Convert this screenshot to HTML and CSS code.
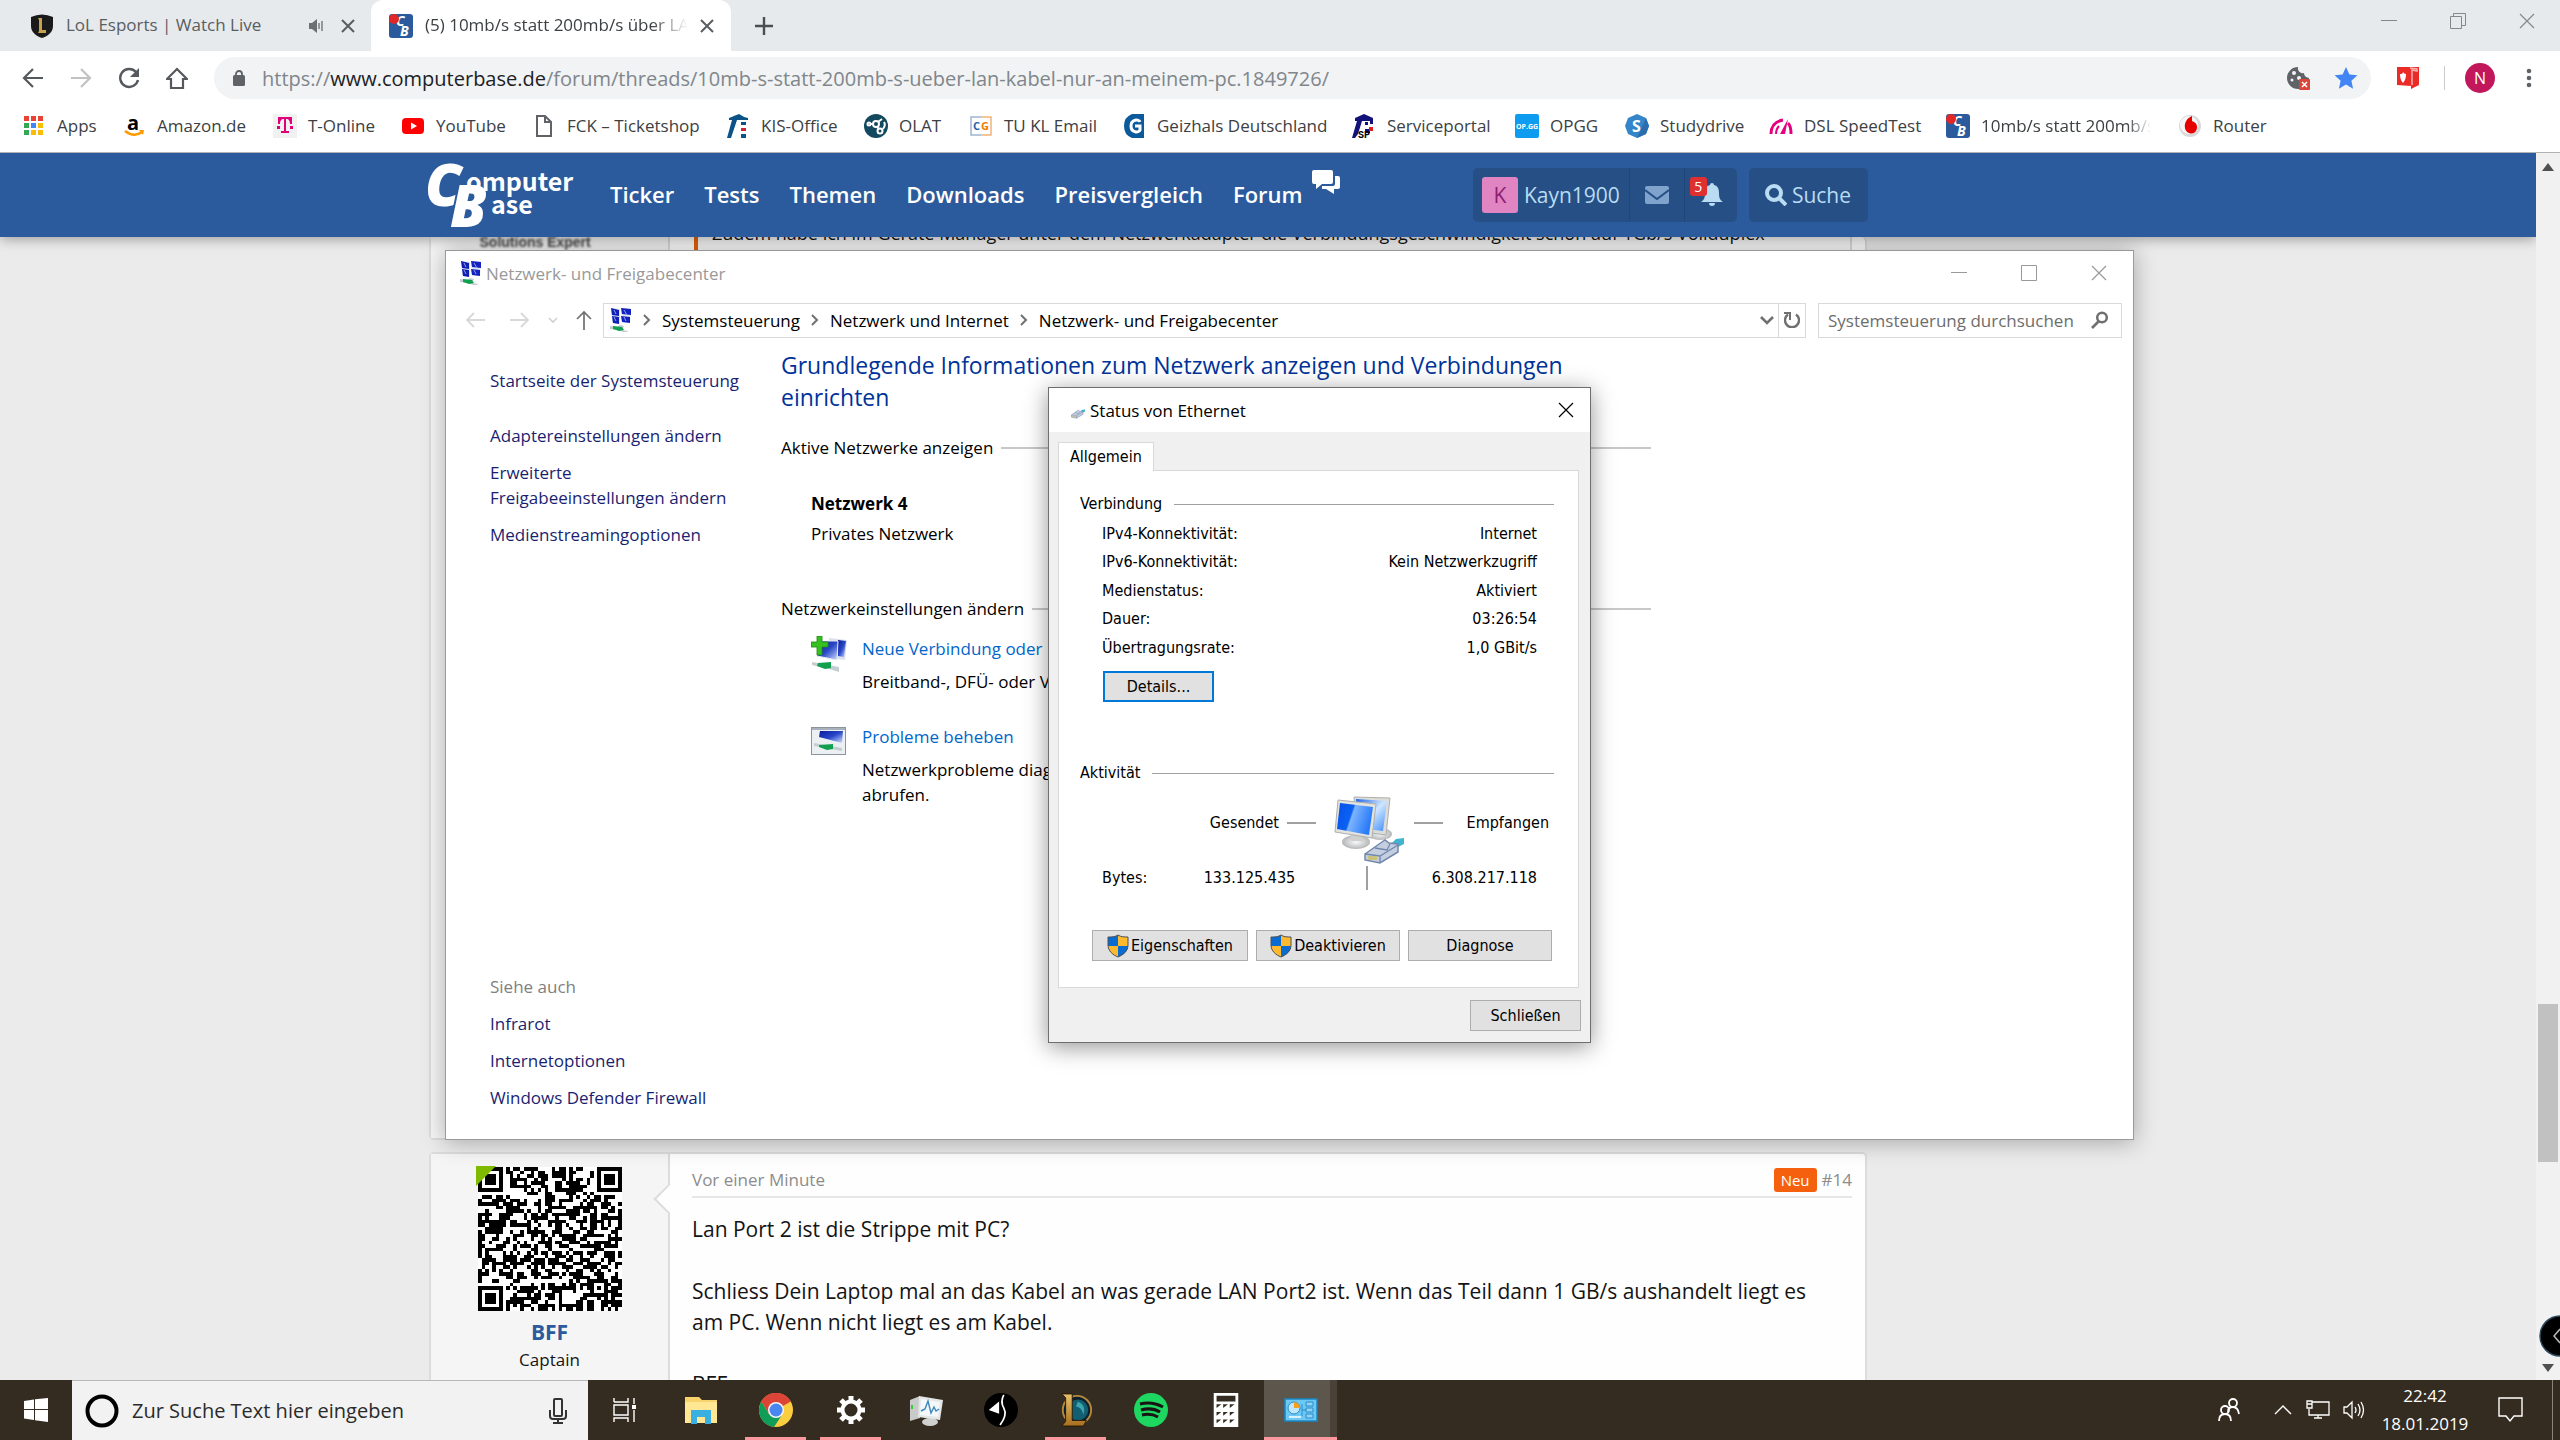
FILE: index.html
```html
<!DOCTYPE html>
<html lang="de">
<head>
<meta charset="utf-8">
<title>(5) 10mb/s statt 200mb/s über LAN</title>
<link rel="stylesheet" href="styles.css">
</head>
<body>
<svg class="defs" aria-hidden="true">
  <defs>
    <linearGradient id="screen" x1="0" y1="0" x2="1" y2="1"><stop offset="0" stop-color="#0a1a9a"/><stop offset=".5" stop-color="#2a48c8"/><stop offset="1" stop-color="#d6e2ff"/></linearGradient>
    <linearGradient id="lcd" x1="0" y1="0" x2="1" y2=".3"><stop offset="0" stop-color="#0a50e8"/><stop offset=".45" stop-color="#0a62f4"/><stop offset=".5" stop-color="#7db4ff"/><stop offset="1" stop-color="#2a7cf8"/></linearGradient>
    <linearGradient id="lcd2" x1="0" y1="0" x2="1" y2="1"><stop offset="0" stop-color="#1c62e8"/><stop offset=".5" stop-color="#cfe6ff"/><stop offset="1" stop-color="#3c8cf8"/></linearGradient>
    <radialGradient id="stand"><stop offset="0" stop-color="#fafafa"/><stop offset="1" stop-color="#b4b6b8"/></radialGradient>
    <linearGradient id="gold" x1="0" y1="0" x2="0" y2="1"><stop offset="0" stop-color="#e8c06a"/><stop offset="1" stop-color="#a8701f"/></linearGradient>
    <symbol id="cb" viewBox="0 0 24 24"><rect width="24" height="24" rx="3" fill="#2b5b9c"/><text x="7" y="12" class="cb-c">C</text><text x="11" y="22" class="cb-b">B</text><circle cx="5" cy="5" r="5" fill="#e02828"/></symbol>
    <symbol id="net" viewBox="0 0 24 24"><path d="M3 0l9 1v15l-8-2z" fill="#dfe4ee"/><path d="M3 0l8 2v6l-7-1zM4 8l7 1v7l-6-1z" fill="#0f1fb4"/><path d="M13 0l10 1-1 14-8-1z" fill="#dfe4ee"/><path d="M13 0l10 1v6l-9-1zM13 8l9 1v6l-8-1z" fill="#1322c0"/><path d="M6 2l2 4M16 2l3 5M6 9l2 4M16 9l2 4" stroke="#8fa2f0" stroke-width="1"/><path d="M2 18l7 1 3-2 4 1-2 4 6 1-2 2-8-3-8-1z" fill="#c3cbd2"/><path d="M5 18l9 1 2 3-5 1-6-2z" fill="#10a050"/></symbol>
    <symbol id="shield" viewBox="0 0 22 24"><path d="M11 1C8 3 5 3 1 3v8c0 6 5 10 10 12 5-2 10-6 10-12V3c-4 0-7 0-10-2z" fill="#ffb92e"/><path d="M11 1C8 3 5 3 1 3v9h10zM11 12h10c0 6-5 9-10 11z" fill="#0a6cd0"/><path d="M11 1C8 3 5 3 1 3v8c0 6 5 10 10 12 5-2 10-6 10-12V3c-4 0-7 0-10-2z" fill="none" stroke="#4b5058" stroke-width="1"/></symbol>
    <symbol id="plug" viewBox="0 0 40 26"><path d="M26 7l6-6 8-1v6l-8 4z" fill="#3fb5d2"/><path d="M1 16L18 4l3-2 4 3 9 1v8L16 25 1 22z" fill="#c4cede" stroke="#7088ae" stroke-width="1.5"/><path d="M1 16l15 2L34 7M16 18v7M11 10l12 2 3-6" fill="none" stroke="#7088ae" stroke-width="1.3"/><path d="M4 18h9v4H4z" fill="#c8c27c"/></symbol>
    <symbol id="x" viewBox="0 0 16 16"><path d="M1 1l14 14M15 1L1 15" fill="none" stroke="currentColor" stroke-width="1.2"/></symbol>
  </defs>
</svg>

<header class="browser">
  <div class="tabs">
    <div class="tab tab-idle">
      <svg class="i24" viewBox="0 0 24 24"><path d="M1 3Q12-2 23 3v9c0 6-5 10-11 12C6 22 1 18 1 12z" fill="#1a1a1a"/><path d="M8 4h4v12h4v3H8l1-2V6z" fill="#c9a24b"/></svg>
      <span class="tab-title">LoL Esports | Watch Live</span>
      <svg class="i16" viewBox="0 0 16 16"><path d="M0 5h3l5-4v14l-5-4H0z" fill="#6b6e72"/><path d="M10 5v6M13 3v10" stroke="#6b6e72" stroke-width="1.3"/></svg>
      <button class="tab-x" aria-label="Tab schließen"><svg viewBox="0 0 14 14"><path d="M1 1l12 12M13 1L1 13" stroke="#5a5d61" stroke-width="2"/></svg></button>
    </div>
    <div class="tab tab-active">
      <svg class="i24"><use href="#cb"/></svg>
      <span class="tab-title fade">(5) 10mb/s statt 200mb/s über LAN</span>
      <button class="tab-x" aria-label="Tab schließen"><svg viewBox="0 0 14 14"><path d="M1 1l12 12M13 1L1 13" stroke="#5a5d61" stroke-width="2"/></svg></button>
    </div>
    <button class="tab-new" aria-label="Neuer Tab"><svg viewBox="0 0 18 18"><path d="M9 0v18M0 9h18" stroke="#4a4d51" stroke-width="2.4"/></svg></button>
    <div class="win-buttons">
      <button aria-label="Minimieren"><svg viewBox="0 0 16 16"><path d="M0 7.500h16" stroke="currentColor"/></svg></button>
      <button aria-label="Verkleinern"><svg viewBox="0 0 16 16"><path d="M.5 3.500h11v12H.5zM3.500 3V.5h12v12H12" fill="none" stroke="currentColor"/></svg></button>
      <button aria-label="Schließen"><svg><use href="#x"/></svg></button>
    </div>
  </div>
  <div class="toolbar">
    <button class="tool" aria-label="Zurück"><svg viewBox="0 0 22 22"><path d="M21 11H2M11 2l-9 9 9 9" fill="none" stroke="#55585c" stroke-width="2.2"/></svg></button>
    <button class="tool" aria-label="Vor"><svg viewBox="0 0 22 22"><path d="M1 11h19M11 2l9 9-9 9" fill="none" stroke="#c0c2c4" stroke-width="2.200"/></svg></button>
    <button class="tool" aria-label="Neu laden"><svg viewBox="0 0 22 22"><path d="M18 5a9 9 0 1 0 2 8" fill="none" stroke="#55585c" stroke-width="2.400"/><path d="M21 1v9h-9z" fill="#55585c"/></svg></button>
    <button class="tool" aria-label="Startseite"><svg viewBox="0 0 22 22"><path d="M1 12L11 2l10 10h-4v9H5v-9z" fill="none" stroke="#55585c" stroke-width="2.200"/></svg></button>
    <div class="omnibox">
      <svg class="lock" viewBox="0 0 14 18"><rect x="1" y="6" width="12" height="11" rx="1.500" fill="#5f6368"/><path d="M4 7V5a3 3 0 0 1 6 0v2" fill="none" stroke="#5f6368" stroke-width="1.800"/></svg>
      <span class="url">https://<b>www.computerbase.de</b>/forum/threads/10mb-s-statt-200mb-s-ueber-lan-kabel-nur-an-meinem-pc.1849726/</span>
      <svg class="i24" viewBox="0 0 24 24"><path d="M11 1a11 11 0 1 0 11 11 5 5 0 0 1-5-5 5 5 0 0 1-6-6z" fill="#5f6368"/><g fill="#f1f3f4"><circle cx="7" cy="7" r="2"/><circle cx="5" cy="14" r="1.500"/><circle cx="12" cy="12" r="2"/></g><rect x="12" y="13" width="11" height="11" rx="1" fill="#db4437"/><path d="M15 16l5 5m0-5l-5 5" stroke="#fff" stroke-width="1.500"/></svg>
      <svg class="i24" viewBox="0 0 24 24"><path d="M12 1l3.400 7.500 8 .8-6 5.400 1.700 8L12 18.500 4.900 22.700l1.700-8-6-5.400 8-.8z" fill="#4285f4"/></svg>
    </div>
    <svg class="i24 ext" viewBox="0 0 24 24"><path d="M1 1h22v18l-8 4v-3L1 19z" fill="#ea2b28"/><path d="M14 2l7 1v2l-5-1v15" fill="none" stroke="#f9b1af" stroke-width="1.500"/><path d="M4 8q3 0 3-2 1 2 3 2 0 6-3 9-3-3-3-9z" fill="#fff"/></svg>
    <span class="sep"></span>
    <button class="profile" aria-label="Profil">N</button>
    <button class="dots" aria-label="Menü"><svg viewBox="0 0 6 20"><circle cx="3" cy="3" r="2.300"/><circle cx="3" cy="10" r="2.300"/><circle cx="3" cy="17" r="2.300"/></svg></button>
  </div>
  <nav class="bookmarks">
    <a href="#"><svg viewBox="0 0 24 24"><path d="M2 2h5v5H2zM9 2h5v5H9zM16 2h5v5h-5z" fill="#ea4335"/><path d="M2 9h5v5H2zM2 16h5v5H2z" fill="#34a853"/><path d="M9 9h5v5H9z" fill="#4285f4"/><path d="M16 9h5v5h-5zM9 16h5v5H9zM16 16h5v5h-5z" fill="#fbbc05"/></svg><span>Apps</span></a>
    <a href="#"><svg viewBox="0 0 24 24"><text x="5" y="16" class="amz">a</text><path d="M3 17q9 7 17 1" fill="none" stroke="#ff9900" stroke-width="2.500"/><path d="M17 16h5l-1 5z" fill="#ff9900"/></svg><span>Amazon.de</span></a>
    <a href="#"><svg viewBox="0 0 24 24"><path d="M0 0h24v24H0z" fill="#f1f1f1"/><path d="M5 3h14v7h-2c0-3-1-5-4-5v12h3v2H8v-2h3V5C8 5 7 7 7 10H5zM4 12h3v3H4zM17 12h3v3h-3z" fill="#e2007a"/></svg><span>T-Online</span></a>
    <a href="#"><svg viewBox="0 0 24 24"><rect x="1" y="4" width="22" height="16" rx="4" fill="#f00"/><path d="M10 8.500v7l6-3.500z" fill="#fff"/></svg><span>YouTube</span></a>
    <a href="#"><svg viewBox="0 0 24 24"><path d="M5 2h8l6 6v14H5zM13 2v6h6" fill="none" stroke="#5f6368" stroke-width="2"/></svg><span>FCK – Ticketshop</span></a>
    <a href="#"><svg viewBox="0 0 24 24"><path d="M3 4q7-3 10-4 4 3 9 4v2H3z" fill="#0a5288"/><path d="M6 6h5L5 24H1z" fill="#0a5288"/><path d="M15 8h5v3h-5zM15 20h5v4h-5z" fill="#0a5288"/><path d="M15 14h5v3h-5z" fill="#d0203a"/></svg><span>KIS-Office</span></a>
    <a href="#"><svg viewBox="0 0 24 24"><circle cx="12" cy="12" r="12" fill="#12495e"/><g fill="none" stroke="#fff" stroke-width="2"><circle cx="12" cy="10" r="3"/><circle cx="5" cy="10" r="1.500"/><circle cx="16" cy="17" r="2.500"/><path d="M7 10h2M13 13l2 2M14 8l4-3M20 8q2 3-1 7"/></g></svg><span>OLAT</span></a>
    <a href="#"><svg viewBox="0 0 24 24"><path d="M12 3H2v18h10" fill="none" stroke="#9fb4d0" stroke-width="1.500"/><path d="M12 3h10v18H12" fill="none" stroke="#f2b27a" stroke-width="1.500"/><text x="4" y="16" class="cg" fill="#1f5fa8">C</text><text x="12" y="16" class="cg" fill="#f07800">G</text></svg><span>TU KL Email</span></a>
    <a href="#"><svg viewBox="0 0 24 24"><path d="M22 0v24H10Q2 21 2 12T10 0z" fill="#0b5a9c"/><path d="M18 8c-1-3-9-3-9 4s8 7 9 4v-4h-5" fill="none" stroke="#fff" stroke-width="3"/></svg><span>Geizhals Deutschland</span></a>
    <a href="#"><svg viewBox="0 0 24 24"><path d="M3 4l9-4 9 4v3H3zM5 7h5L6 20l-3 4H0zM13 8h3v3h-3zM13 15h5v4h-5zM18 7h3v3h-3z" fill="#12127a"/><path d="M17 13h4v4h-4z" fill="#e02020"/><text x="6" y="24" class="sp">SP</text></svg><span>Serviceportal</span></a>
    <a href="#"><svg viewBox="0 0 24 24"><rect width="24" height="24" rx="2" fill="#0d9cf0"/><text x="1" y="15" class="opgg">OP.GG</text></svg><span>OPGG</span></a>
    <a href="#"><svg viewBox="0 0 24 24"><path d="M12 0l9 4 3 8-3 8-9 4-9-4-3-8 3-8z" fill="#3486c8"/><path d="M12 24l9-4 3-8-3-8z" fill="#2a6eae"/><text x="7" y="18" class="studs">S</text></svg><span>Studydrive</span></a>
    <a href="#"><svg viewBox="0 0 24 24"><path d="M2 20q0-12 12-14M22 20q0-8-3-11" fill="none" stroke="#e6007e" stroke-width="3"/><path d="M7 20q0-5 3-8" fill="none" stroke="#e6007e" stroke-width="2"/><path d="M11 20L19 5l-3 15z" fill="#e6007e"/></svg><span>DSL SpeedTest</span></a>
    <a href="#"><svg><use href="#cb"/></svg><span class="fade">10mb/s statt 200mb/s über</span></a>
    <a href="#"><svg viewBox="0 0 24 24"><circle cx="12" cy="12" r="11" fill="#d9d9d9"/><circle cx="11" cy="11" r="9" fill="#f6f6f6"/><path d="M14 2c-5 2-8 7-7 12a6 6 0 0 0 12-1c0-4-3-5-5-6 0-2 0-3 0-5z" fill="#e60000"/></svg><span>Router</span></a>
  </nav>
</header>

<div class="viewport">
  <div class="page">
    <header class="site">
      <div class="site-in">
        <svg class="logo" viewBox="0 0 150 68" role="img" aria-label="ComputerBase"><text x="-3" y="45" class="l-big">C</text><text x="22" y="66" class="l-big l-b">B</text><text x="38" y="30" class="l-small">omputer</text><text x="63" y="53" class="l-small">ase</text></svg>
        <nav class="site-nav">
          <a href="#">Ticker</a><a href="#">Tests</a><a href="#">Themen</a><a href="#">Downloads</a><a href="#">Preisvergleich</a><a href="#">Forum</a>
          <svg class="chat" viewBox="0 0 28 25"><path d="M2 0h17q2 0 2 2v10q0 2-2 2h-9l-6 5v-5H2q-2 0-2-2V2q0-2 2-2z" fill="#fff"/><path d="M23 6h3q2 0 2 2v9q0 2-2 2h-4v5l-8-5h-4v-3h11q2 0 2-2z" fill="#fff"/></svg>
        </nav>
        <div class="user">
          <a href="#" class="user-name"><span class="k">K</span>Kayn1900</a>
          <a href="#" class="user-ic" aria-label="Nachrichten"><svg viewBox="0 0 24 18"><rect width="24" height="18" rx="2" fill="#7fa3cc"/><path d="M0 4l12 9 12-9" fill="none" stroke="#264f86" stroke-width="2"/></svg></a>
          <a href="#" class="user-ic bell" aria-label="Hinweise"><svg viewBox="0 0 22 24"><path d="M11 0a2 2 0 0 1 2 2c4 1 5 4 5 8 0 5 1 7 4 9H0c3-2 4-4 4-9 0-4 1-7 5-8a2 2 0 0 1 2-2zM8 20h6a3 3 0 0 1-6 0z" fill="#b9dcf3"/></svg><span class="count">5</span></a>
        </div>
        <button class="site-search"><svg viewBox="0 0 22 22"><circle cx="9" cy="9" r="7" fill="none" stroke="#b9dcf3" stroke-width="4"/><path d="M14 14l7 7" stroke="#b9dcf3" stroke-width="4"/></svg>Suche</button>
      </div>
    </header>
    <main class="content">
      <article class="post prev">
        <aside class="author"><span class="badge-card">Solutions Expert</span></aside>
        <div class="body"><blockquote>Zudem habe ich im Geräte Manager unter dem Netzwerkadapter die Verbindungsgeschwindigkeit schon auf 1Gb/s Vollduplex</blockquote></div>
      </article>
      <article class="post">
        <aside class="author">
          <div class="avatar"><svg id="qr" viewBox="0 0 41 41" shape-rendering="crispEdges"></svg></div>
          <a href="#" class="nick">BFF</a>
          <span class="rank">Captain</span>
        </aside>
        <div class="body bubble">
          <div class="meta"><time>Vor einer Minute</time><span class="neu">Neu</span><a href="#">#14</a></div>
          <div class="text">Lan Port 2 ist die Strippe mit PC?<br><br>Schliess Dein Laptop mal an das Kabel an was gerade LAN Port2 ist. Wenn das Teil dann 1 GB/s aushandelt liegt es<br>am PC. Wenn nicht liegt es am Kabel.<br><br>BFF</div>
        </div>
      </article>
    </main>
  </div>
  <div class="scroll"><span class="up"></span><span class="thumb"></span><span class="down"></span></div>
  <button class="overlay" aria-label="Overlay öffnen"><svg viewBox="0 0 42 42"><circle cx="21" cy="21" r="20" fill="#000" stroke="#2c4a5c" stroke-width="1.500"/><path d="M21 14l-6 7 6 7" fill="none" stroke="#bbb" stroke-width="1.500"/></svg></button>
</div>

<section class="window explorer">
  <div class="ex-title"><svg class="i24"><use href="#net"/></svg><span>Netzwerk- und Freigabecenter</span>
    <div class="ex-buttons">
      <button aria-label="Minimieren"><svg viewBox="0 0 16 16"><path d="M0 7.500h16" stroke="currentColor"/></svg></button>
      <button aria-label="Maximieren"><svg viewBox="0 0 16 16"><path d="M.5.5h15v15H.5z" fill="none" stroke="currentColor"/></svg></button>
      <button aria-label="Schließen"><svg><use href="#x"/></svg></button>
    </div>
  </div>
  <div class="ex-bar">
    <svg class="nav-a" viewBox="0 0 20 20"><path d="M20 10H2M9 3l-7 7 7 7" fill="none" stroke="#d8d8d8" stroke-width="1.800"/></svg>
    <svg class="nav-b" viewBox="0 0 20 20"><path d="M0 10h18M11 3l7 7-7 7" fill="none" stroke="#d8d8d8" stroke-width="1.800"/></svg>
    <svg class="nav-c" viewBox="0 0 10 10"><path d="M1 3l4 4 4-4" fill="none" stroke="#d0d0d0" stroke-width="1.600"/></svg>
    <svg class="nav-d" viewBox="0 0 18 20"><path d="M9 20V2M2 9l7-7 7 7" fill="none" stroke="#707070" stroke-width="1.700"/></svg>
    <div class="address">
      <svg class="i24"><use href="#net"/></svg>
      <svg class="chev" viewBox="0 0 8 12"><path d="M1 1l5 5-5 5" fill="none" stroke="#707070" stroke-width="2"/></svg><span>Systemsteuerung</span>
      <svg class="chev" viewBox="0 0 8 12"><path d="M1 1l5 5-5 5" fill="none" stroke="#707070" stroke-width="2"/></svg><span>Netzwerk und Internet</span>
      <svg class="chev" viewBox="0 0 8 12"><path d="M1 1l5 5-5 5" fill="none" stroke="#707070" stroke-width="2"/></svg><span>Netzwerk- und Freigabecenter</span>
      <svg class="drop" viewBox="0 0 14 10"><path d="M1 2l6 6 6-6" fill="none" stroke="#707070" stroke-width="2.600"/></svg>
      <button class="reload" aria-label="Aktualisieren"><svg viewBox="0 0 16 16"><path d="M12 2.500A7 7 0 1 1 4 2.500" fill="none" stroke="#707070" stroke-width="2.400"/><path d="M0 1h6v7" fill="none" stroke="#707070" stroke-width="2"/></svg></button>
    </div>
    <label class="ex-search"><input type="text" placeholder="Systemsteuerung durchsuchen" aria-label="Systemsteuerung durchsuchen"><svg viewBox="0 0 18 18"><circle cx="11" cy="6.500" r="4.800" fill="none" stroke="#707070" stroke-width="2.500"/><path d="M8 10l-7 7" stroke="#707070" stroke-width="2.600"/></svg></label>
  </div>
  <div class="ex-main">
    <nav class="side">
      <a href="#" class="home">Startseite der Systemsteuerung</a>
      <a href="#">Adaptereinstellungen ändern</a>
      <a href="#">Erweiterte Freigabeeinstellungen ändern</a>
      <a href="#">Medienstreamingoptionen</a>
      <span class="also">Siehe auch</span>
      <a href="#">Infrarot</a>
      <a href="#">Internetoptionen</a>
      <a href="#">Windows Defender Firewall</a>
    </nav>
    <div class="center">
      <h1>Grundlegende Informationen zum Netzwerk anzeigen und Verbindungen einrichten</h1>
      <h2 class="rule">Aktive Netzwerke anzeigen</h2>
      <div class="network"><strong>Netzwerk 4</strong><span>Privates Netzwerk</span></div>
      <h2 class="rule">Netzwerkeinstellungen ändern</h2>
      <div class="task">
        <svg viewBox="0 0 36 36"><path d="M18 2l18 2-2 20-16-2z" fill="#dbe0ea"/><path d="M27 4l8 1-2 16-6-1z" fill="url(#screen)"/><path d="M8 5l19 0-1 19L6 20z" fill="url(#screen)" stroke="#e4e8f0"/><path d="M6 0h5v6h6v5h-6v8H6v-8H0V6h6z" fill="#35c020" stroke="#1c8a12" stroke-width=".8"/><path d="M1 26l27 5v5l-10-3-17-4z" fill="#c4ced2"/><path d="M7 27l13-1v6l-6 1-8-3z" fill="#12a050"/></svg>
        <div><a href="#">Neue Verbindung oder neues Netzwerk einrichten</a><p>Breitband-, DFÜ- oder VPN-Verbindung bzw. Router oder Zugriffspunkt einrichten.</p></div>
      </div>
      <div class="task">
        <svg viewBox="0 0 36 36"><rect x=".5" y="3.500" width="34" height="27" fill="#edf0f3" stroke="#8a949e"/><path d="M1 5h33" stroke="#a8b2bc" stroke-width="2"/><path d="M9 7h23l-1 12L8 13z" fill="url(#screen)"/><path d="M3 19l28 5v3L3 22z" fill="#c4ced2"/><path d="M8 21l14-1v5l-6 1-8-3z" fill="#12a050"/></svg>
        <div><a href="#">Probleme beheben</a><p>Netzwerkprobleme diagnostizieren und beheben oder Problembehandlungsinformationen abrufen.</p></div>
      </div>
    </div>
  </div>
</section>

<section class="window dialog" role="dialog" aria-label="Status von Ethernet">
  <div class="dl-title"><svg class="plug"><use href="#plug"/></svg><span>Status von Ethernet</span><button aria-label="Schließen"><svg><use href="#x"/></svg></button></div>
  <div class="dl-body">
    <button class="dl-tab">Allgemein</button>
    <div class="panel">
      <h3 class="rule">Verbindung</h3>
      <table>
        <tr><th>IPv4-Konnektivität:</th><td>Internet</td></tr>
        <tr><th>IPv6-Konnektivität:</th><td>Kein Netzwerkzugriff</td></tr>
        <tr><th>Medienstatus:</th><td>Aktiviert</td></tr>
        <tr><th>Dauer:</th><td>03:26:54</td></tr>
        <tr><th>Übertragungsrate:</th><td>1,0 GBit/s</td></tr>
      </table>
      <button class="btn focus">Details...</button>
      <h3 class="rule act">Aktivität</h3>
      <div class="traffic">
        <span>Gesendet</span><i></i>
        <svg class="pcs" viewBox="0 0 72 68"><ellipse cx="46" cy="38" rx="12" ry="6" fill="url(#stand)"/><path d="M20 1l36 1-4 37-30-4z" fill="#dcdcd8" stroke="#aeb0ae"/><path d="M22 3l31 2-4 30-26-3z" fill="url(#lcd2)"/><ellipse cx="22" cy="46" rx="14" ry="7" fill="url(#stand)"/><path d="M17 36h12v9H17z" fill="#cfd0ce"/><path d="M4 4l38 4-4 34L1 36z" fill="#e2e2de" stroke="#aeb0ae"/><path d="M6 7l33 4-4 28L3 33z" fill="url(#lcd)"/><svg x="29" y="42" width="42" height="26"><use href="#plug"/></svg></svg>
        <i></i><span>Empfangen</span>
      </div>
      <div class="bytes"><span>Bytes:</span><span class="out">133.125.435</span><i></i><span class="in">6.308.217.118</span></div>
      <div class="actions">
        <button class="btn wide"><svg><use href="#shield"/></svg>Eigenschaften</button>
        <button class="btn"><svg><use href="#shield"/></svg>Deaktivieren</button>
        <button class="btn">Diagnose</button>
      </div>
    </div>
    <button class="btn close">Schließen</button>
  </div>
</section>

<footer class="taskbar">
  <button class="start" aria-label="Start"><svg viewBox="0 0 24 24"><path d="M0 3l10-1.500V11H0zM11 1.300L24 0v11H11zM0 12h10v10L0 20.500zM11 12h13v12l-13-1.800z" fill="#fff"/></svg></button>
  <label class="cortana"><svg viewBox="0 0 34 34"><circle cx="17" cy="17" r="14.500" fill="none" stroke="#000" stroke-width="4"/></svg><input type="text" placeholder="Zur Suche Text hier eingeben" aria-label="Suche"><svg class="mic" viewBox="0 0 18 26"><rect x="5" y="1" width="8" height="17" rx="1" fill="none" stroke="#333" stroke-width="2"/><path d="M1 12v6q0 3 3 3h10q3 0 3-3v-6M9 21v4M4 25h10" fill="none" stroke="#333" stroke-width="2"/></svg></label>
  <div class="apps">
    <button aria-label="Taskansicht"><svg viewBox="0 0 34 34"><path d="M5 9V5M5 9h14V5M5 12h14v10H5zM5 29v-4h14v4M25 5v6M25 17v12" fill="none" stroke="#fff" stroke-width="1.400"/><path d="M23 12h4v4h-4z" fill="#fff"/></svg></button>
    <button aria-label="Explorer"><svg viewBox="0 0 34 34"><path d="M1 4h14l3 3h15v23H1z" fill="#f8d36b"/><path d="M1 9h32v21H1z" fill="#ffe793"/><path d="M7 17h20v14h-6v-7h-8v7H7z" fill="#3ab0e2"/></svg></button>
    <button aria-label="Chrome" class="run"><svg viewBox="0 0 34 34"><circle cx="17" cy="17" r="17" fill="#fdcd40"/><path d="M17 17L2.300 8.500A17 17 0 0 1 31.700 8.500z" fill="#db4437"/><path d="M17 8.500h14.700A17 17 0 0 0 2.300 8.500L10 21z" fill="#db4437"/><path d="M2.300 8.500A17 17 0 0 0 15 34l8-12-13-1z" fill="#0f9d58"/><circle cx="17" cy="17" r="8" fill="#f4f4f4"/><circle cx="17" cy="17" r="6.500" fill="#4a86f0"/></svg></button>
    <button aria-label="Einstellungen" class="run"><svg viewBox="0 0 34 34"><circle cx="17" cy="17" r="8.500" fill="none" stroke="#fff" stroke-width="4"/><path d="M17 3v5M17 26v5M3 17h5M26 17h5M7 7l4 4M23 23l4 4M27 7l-4 4M11 23l-4 4" stroke="#fff" stroke-width="5"/></svg></button>
    <button aria-label="Task-Manager"><svg viewBox="0 0 34 34"><path d="M1 7l10-4v22L1 28z" fill="#c9cbcb"/><ellipse cx="21" cy="29" rx="8" ry="4" fill="#cfd1d1"/><path d="M10 3l24 4-3 20-22-3z" fill="#e4e6e6"/><path d="M12 6l19 3-2 15-18-2z" fill="#f2f8fc"/><path d="M12 18l4-2 3-8 3 12 3-6 2 4 3-2" fill="none" stroke="#3b86b8" stroke-width="1.400"/><path d="M3 12v4" stroke="#3c3" stroke-width="2"/></svg></button>
    <button aria-label="Launcher"><svg viewBox="0 0 36 36"><circle cx="18" cy="18" r="18" fill="#000"/><path d="M5 18L16 9v13z" fill="#fff"/><path d="M21 2q-4 7 0 14t-4 18" fill="none" stroke="#fff" stroke-width="1.800"/></svg></button>
    <button aria-label="League of Legends" class="run"><svg viewBox="0 0 36 36"><circle cx="19" cy="18" r="16" fill="#b58a3c"/><circle cx="19" cy="18" r="14" fill="#0c1f2c"/><circle cx="20" cy="18" r="11" fill="#125f72"/><path d="M20 9q9 4 6 14-2-8-8-9z" fill="#3aa6b0"/><path d="M3 1h11v28h15l-3 6H3l4-5V5z" fill="url(#gold)" stroke="#241808"/></svg></button>
    <button aria-label="Spotify"><svg viewBox="0 0 34 34"><circle cx="17" cy="17" r="17" fill="#1ed760"/><path d="M6 11q12-3 23 3M7 17q11-3 19 2M8 22q9-2 16 2" fill="none" stroke="#191414" stroke-width="3"/></svg></button>
    <button aria-label="Rechner"><svg viewBox="0 0 36 36"><path d="M5 0h26v36H5z" fill="#fff"/><path d="M8 3h20v6H8zM8 12h5l-5 4zM15 12h5l-5 4zM22 12h5l-5 4zM8 20h5l-5 4zM15 20h5l-5 4zM22 20h5l-5 4zM8 28h5l-5 4zM15 28h5l-5 4zM22 28h5l-5 4z" fill="#352c21"/></svg></button>
    <button aria-label="Systemsteuerung" class="run on"><svg viewBox="0 0 34 34"><path d="M1 6h32v22H1z" fill="#6cc8f4" stroke="#1a86c4" stroke-width="1.500"/><circle cx="10" cy="15" r="6" fill="#bfe6fb" stroke="#2a8cc8"/><path d="M10 15V9a6 6 0 0 1 6 6z" fill="#f4a024"/><path d="M22 9h7v4h-7zM22 15h7v4h-7zM22 21h7v4h-7zM18 17h4M18 11v12" fill="#8fd4f6" stroke="#2a8cc8"/><path d="M5 24h12" stroke="#fff" stroke-width="1.500"/></svg></button>
  </div>
  <div class="tray">
    <svg class="people" viewBox="0 0 24 24"><g fill="none" stroke="#fff" stroke-width="1.800"><circle cx="16" cy="5" r="4"/><path d="M11 14q0-5 5-5t6 7"/><circle cx="8" cy="12" r="4"/><path d="M2 23q0-7 6-7t6 7"/></g></svg>
    <svg class="up-ic" viewBox="0 0 18 10"><path d="M1 9l8-8 8 8" fill="none" stroke="#fff" stroke-width="1.400"/></svg>
    <svg class="lan" viewBox="0 0 24 20"><path d="M6 2h17v13H3V9M8 18h8M12 15v3M1 1h5v7H1zM1 4h5" fill="none" stroke="#fff" stroke-width="1.300"/></svg>
    <svg class="vol" viewBox="0 0 22 20"><path d="M1 7h3l5-5v16l-5-5H1zM12 7q2 3 0 6M15 4q4 6 0 12M18 2q5 8 0 16" fill="none" stroke="#fff" stroke-width="1.300"/></svg>
    <div class="clock"><span>22:42</span><span>18.01.2019</span></div>
    <svg class="note" viewBox="0 0 26 26"><path d="M1 1h23v18h-8l-4 5-4-5H1z" fill="none" stroke="#fff" stroke-width="1.400"/></svg>
  </div>
</footer>
<script src="qr.js"></script>
</body>
</html>
```
FILE: styles.css
```css
* { box-sizing: border-box; }
html, body { height: 100%; }
body {
  margin: 0;
  display: flex;
  flex-direction: column;
  overflow: hidden;
  position: relative;
  font: 17px/25px "Open Sans", "Noto Sans", sans-serif;
  color: #141414;
  background: #ebebeb;
}
button { border: 0; padding: 0; background: none; font: inherit; color: inherit; }
a { color: inherit; text-decoration: none; }
input { border: 0; padding: 0; background: none; font: inherit; outline: 0; min-width: 0; }
svg { display: block; flex: none; }
i { font-style: normal; }
.defs { position: absolute; width: 0; height: 0; }
.i24 { width: 24px; height: 24px; }
.i16 { width: 16px; height: 16px; }
.fade { -webkit-mask-image: linear-gradient(to right, #000 86%, transparent); mask-image: linear-gradient(to right, #000 86%, transparent); overflow: hidden; }

/* Browser */
.browser { flex: none; background: #fff; border-bottom: 1px solid #b2b2b2; color: #3c4043; }
.tabs { display: flex; height: 51px; background: #e6eaed; }
.tab { display: flex; align-items: center; gap: 12px; }
.tab-idle { width: 371px; padding: 0 16px 0 30px; color: #5a5d61; }
.tab-active { width: 360px; padding: 0 17px 0 18px; background: #fff; border-radius: 12px 12px 0 0; }
.tab-title { flex: 1; white-space: nowrap; min-width: 0; padding-bottom: 3px; }
.tab-x svg { width: 14px; height: 14px; }
.tab-idle .tab-x { margin-left: 4px; }
.tab-new { margin-left: 24px; }
.tab-new svg { width: 18px; height: 18px; }
.win-buttons { margin-left: auto; padding: 13px 25px 0 0; display: flex; align-items: flex-start; gap: 53px; color: #85888b; }
.win-buttons svg { width: 16px; height: 16px; }
.toolbar { display: flex; align-items: center; height: 54px; padding: 0 28px 0 22px; }
.tool { margin-right: 26px; }
.tool svg { width: 22px; height: 22px; }
.omnibox { flex: 1; display: flex; align-items: center; height: 42px; margin-right: 25px; padding: 0 13px 0 18px; border-radius: 21px; background: #f1f3f4; }
.lock { width: 14px; height: 18px; margin-right: 16px; }
.url { flex: 1; font-size: 20px; color: #80868b; white-space: nowrap; }
.url b { font-weight: 400; color: #202124; }
.omnibox .i24 { margin-left: 23px; }
.sep { width: 1px; height: 24px; margin: 0 20px 0 24px; background: #c8cacc; }
.profile { width: 30px; height: 30px; border-radius: 50%; background: #c2185b; color: #fff; font-size: 16px; }
.dots { margin-left: 31px; }
.dots svg { width: 6px; height: 20px; fill: #5f6368; }
.bookmarks {
  display: grid;
  grid-template-columns: 100px 151px 128px 131px 194px 138px 105px 153px 230px 163px 110px 144px 177px 232px 1fr;
  align-items: center;
  height: 47px;
  padding: 0 0 5px 22px;
}
.bookmarks a { display: flex; align-items: center; gap: 11px; white-space: nowrap; }
.bookmarks span { padding-bottom: 2px; }
.bookmarks svg { width: 24px; height: 24px; }
.bookmarks .fade { width: 170px; }
.cb-c, .cb-b { font: italic 700 14px "Open Sans", sans-serif; fill: #fff; }
.amz { font: 700 20px "Open Sans", sans-serif; }
.cg { font: 700 11px "Open Sans", sans-serif; }
.sp { font: 700 10px "Liberation Mono", monospace; }
.opgg { font: 700 7px "Open Sans", sans-serif; fill: #fff; }
.studs { font: 700 16px "Open Sans", sans-serif; fill: #fff; }

/* Forum page */
.viewport { flex: 1; min-height: 0; display: flex; position: relative; overflow: hidden; }
.page { flex: 1; min-width: 0; overflow: hidden; }
.site { position: relative; z-index: 1; background: #2b5b9c; color: #fff; box-shadow: 0 2px 12px rgba(0, 0, 0, .35); }
.site-in { display: flex; align-items: center; max-width: 1680px; height: 84px; margin: 0 auto; }
.logo { width: 150px; height: 68px; margin-right: 32px; overflow: visible; }
.l-big { font: italic 800 58px "Open Sans", sans-serif; fill: #fff; }
.l-b { stroke: #2b5b9c; stroke-width: 4px; paint-order: stroke; }
.l-small { font: 700 25px "Noto Sans CJK JP", sans-serif; fill: #fff; }
.site-nav { display: flex; align-items: center; gap: 30px; padding-bottom: 2px; font-size: 22px; font-weight: 600; }
.chat { width: 28px; height: 25px; margin: 0 0 24px -21px; }
.user { display: flex; align-items: center; height: 54px; margin-left: auto; margin-right: 12px; border-radius: 5px; background: #264f86; color: #b9dcf3; }
.user a { display: flex; align-items: center; height: 54px; padding: 0 15px; border-left: 1px solid #21477a; }
.user .user-name { padding: 0 9px 0 9px; gap: 6px; border: 0; font-size: 21px; }
.k { width: 36px; height: 36px; border-radius: 3px; background: #e085c2; color: #8c1f70; text-align: center; line-height: 36px; }
.user-ic svg { width: 24px; height: 24px; }
.user .bell { position: relative; padding-right: 13px; }
.count { position: absolute; left: 5px; top: 9px; width: 17px; height: 19px; border-radius: 3px; background: #e02f2f; color: #fff; font-size: 14px; line-height: 19px; text-align: center; }
.site-search { display: flex; align-items: center; gap: 5px; height: 54px; padding: 0 17px 0 16px; margin-right: 240px; border-radius: 5px; background: #264f86; color: #b9dcf3; font-size: 21px; }
.site-search svg { width: 22px; height: 22px; }
.content { max-width: 1680px; margin: 0 auto; padding: 0 241px 0 1px; display: flex; flex-direction: column; gap: 12px; }
.post { display: flex; border: 2px solid #dcdcdc; border-radius: 5px; background: #fefefe; }
.author { width: 239px; flex: none; display: flex; flex-direction: column; align-items: center; background: #f5f5f5; border-right: 2px solid #dcdcdc; }
.body { flex: 1; min-width: 0; position: relative; padding: 9px 13px 0 22px; }
.prev { min-height: 903px; border-top: 0; }
.prev .body { padding: 0 13px 0 24px; }
.badge-card { width: 144px; padding-left: 2px; margin-top: -7px; font: 700 14px/25px "Liberation Sans", sans-serif; color: #444; filter: blur(1px); }
blockquote { margin: 0; padding: 0 14px; margin-top: -19px; height: 160px; border-left: 4px solid #e8600c; border-right: 2px solid #dcdcdc; background: #fafafa; font-size: 18px; line-height: 31px; white-space: nowrap; }
.avatar { position: relative; width: 144px; height: 144px; margin-top: 13px; border-radius: 3px; background: #fff; }
.avatar svg { width: 144px; height: 144px; }
.avatar::after { content: ""; position: absolute; left: -2px; top: -1px; border-top: 20px solid #7fba00; border-right: 20px solid transparent; }
.nick { margin-top: 6px; font-size: 21px; line-height: 30px; font-weight: 700; color: #2b5b9c; }
.rank { line-height: 26px; }
.bubble::before { content: ""; position: absolute; left: -12px; top: 34px; width: 20px; height: 20px; background: #fefefe; border-left: 2px solid #dcdcdc; border-bottom: 2px solid #dcdcdc; transform: rotate(45deg); }
.meta { display: flex; align-items: center; gap: 5px; height: 35px; border-bottom: 2px solid #e6e6e6; color: #8c8c8c; }
.meta time { flex: 1; }
.neu { padding: 0 7px; border-radius: 3px; background: #f5600f; color: #fff; font-size: 15px; line-height: 24px; }
.text { padding-top: 16px; font-size: 21px; line-height: 31px; white-space: nowrap; }
.scroll { width: 24px; flex: none; display: flex; flex-direction: column; align-items: center; background: #f1f1f1; }
.thumb { width: 20px; height: 158px; margin-top: 833px; background: #c1c1c1; }
.up { margin-top: 10px; border: 6px solid transparent; border-top: 0; border-bottom: 8px solid #505050; }
.down { margin: auto 0 8px; border: 6px solid transparent; border-bottom: 0; border-top: 8px solid #505050; }
.overlay { position: absolute; right: -21px; bottom: 23px; }
.overlay svg { width: 42px; height: 42px; }

/* Windows on the desktop */
.window { position: absolute; background: #fff; }
.explorer { left: 445px; right: 426px; top: 250px; bottom: 300px; display: flex; flex-direction: column; border: 1px solid #9a9a9a; box-shadow: 0 2px 22px rgba(0, 0, 0, .3); }
.ex-title { display: flex; align-items: center; gap: 4px; height: 44px; padding-left: 12px; color: #999; }
.ex-buttons { display: flex; gap: 54px; margin: 0 26px 0 auto; }
.ex-buttons button { height: 16px; }
.ex-buttons svg, .dl-title button svg { width: 16px; height: 16px; }
.ex-bar { display: flex; align-items: center; height: 50px; padding: 0 11px 0 19px; }
.nav-a, .nav-b { width: 20px; height: 20px; margin-right: 25px; }
.nav-b { margin-right: 18px; }
.nav-c { width: 10px; height: 10px; margin-right: 17px; }
.nav-d { width: 18px; height: 20px; margin-right: 10px; }
.address { flex: 1; display: flex; align-items: center; gap: 11px; height: 35px; padding-left: 4px; border: 1px solid #d9d9d9; color: #000; }
.address .chev { width: 8px; height: 12px; }
.drop { width: 14px; height: 10px; margin-left: auto; margin-right: -7px; }
.reload { width: 27px; height: 33px; display: grid; place-items: center; border-left: 1px solid #d9d9d9; }
.reload svg { width: 16px; height: 16px; }
.ex-search { display: flex; align-items: center; width: 304px; height: 35px; margin-left: 12px; padding: 0 12px 0 9px; border: 1px solid #d9d9d9; }
.ex-search input { flex: 1; }
.ex-search input::placeholder { color: #6d6d6d; opacity: 1; }
.ex-search svg { width: 18px; height: 18px; }
.ex-main { flex: 1; display: flex; padding: 4px 0 29px 44px; }
.side { width: 291px; display: flex; flex-direction: column; gap: 12px; padding: 19px 40px 0 0; color: #1a1f71; }
.side a { white-space: normal; }
.side .home { margin-bottom: 18px; white-space: nowrap; }
.also { margin-top: auto; color: #808080; }
.center { width: 870px; color: #000; }
h1, h2, h3, p { margin: 0; font-weight: 400; }
h1 { width: 800px; font-size: 23px; line-height: 32px; color: #003399; }
.rule { display: flex; align-items: center; gap: 8px; white-space: nowrap; }
.rule::after { content: ""; flex: 1; height: 2px; background: #c8c8c8; }
h2 { font-size: 17px; margin-top: 22px; }
.network { display: flex; flex-direction: column; gap: 5px; padding: 31px 0 28px 30px; }
.task { display: flex; gap: 15px; padding: 15px 0 6px 30px; }
.task + .task { padding-top: 24px; }
.task svg { width: 36px; height: 36px; }
.task a { color: #0066cc; }
.task p { width: 720px; margin-top: 8px; }

.dialog { left: 1048px; top: 387px; width: 543px; border: 1px solid #6e6e6e; box-shadow: 0 4px 22px rgba(0, 0, 0, .42); color: #000; font: 16px/20px "DejaVu Sans Condensed", "DejaVu Sans", sans-serif; }
.dl-title { display: flex; align-items: center; gap: 5px; height: 44px; padding: 0 16px 0 22px; font: 17px/25px "Open Sans", sans-serif; }
.dl-title .plug { width: 14px; height: 10px; margin-top: 8px; }
.dl-title button { margin-left: auto; }
.dl-body { padding: 10px 9px 11px; background: #f0f0f0; display: flex; flex-direction: column; align-items: flex-start; }
.dl-tab { height: 29px; padding: 0 11px; margin-bottom: -1px; position: relative; background: #fff; border: 1px solid #d9d9d9; border-bottom: 0; }
.panel { width: 521px; background: #fff; border: 1px solid #d9d9d9; padding: 23px 24px 26px 21px; }
h3 { font-size: 16px; }
h3.rule { gap: 12px; }
h3.rule::after { height: 1px; background: #a0a0a0; }
table { width: 435px; margin: 5px 0 9px 22px; border-collapse: collapse; }
th, td { padding: 0; height: 29px; font-weight: 400; text-align: left; }
tr:nth-child(even) > * { height: 28px; }
td { text-align: right; }
.btn { height: 31px; width: 144px; display: flex; align-items: center; justify-content: center; background: #e1e1e1; border: 1px solid #adadad; }
.btn.focus { width: 111px; margin-left: 23px; border: 2px solid #0078d7; }
.btn svg { width: 22px; height: 24px; margin-right: 2px; }
.act { margin-top: 61px; }
.traffic { display: grid; grid-template-columns: 199px 29px 1fr 29px 98px; align-items: start; column-gap: 8px; margin: 13px 5px 0 0; }
.traffic i { height: 2px; margin-top: 26px; background: #a0a0a0; }
.traffic span { margin-top: 17px; text-align: right; }
.pcs { width: 72px; height: 68px; justify-self: end; }
.bytes { display: flex; align-items: center; height: 24px; margin: 2px 17px 0 22px; }
.bytes .out { width: 148px; text-align: right; }
.bytes i { width: 2px; height: 24px; margin-left: 71px; background: #a0a0a0; }
.bytes .in { margin-left: auto; }
.actions { display: flex; gap: 8px; margin: 40px 0 0 12px; }
.wide { width: 156px; }
.close { width: 111px; margin: 12px 0 0 auto; }

/* Taskbar */
.taskbar { flex: none; display: flex; align-items: center; height: 60px; background: #352c21; color: #fff; }
.start { width: 72px; display: grid; place-items: center; }
.start svg { width: 24px; height: 24px; }
.cortana { display: flex; align-items: center; width: 516px; height: 60px; padding: 0 21px 0 13px; border-top: 1px solid #b8b8b8; background: #f2f2f2; font-size: 20px; }
.cortana svg { width: 34px; height: 34px; }
.cortana .mic { width: 18px; height: 26px; }
.cortana input { flex: 1; margin-left: 13px; }
.cortana input::placeholder { color: #2b2b2b; opacity: 1; }
.apps { display: flex; gap: 2px; padding-left: 1px; }
.apps button { width: 73px; height: 60px; display: grid; place-items: center; position: relative; }
.apps button svg { width: 34px; height: 34px; }
.run::after { content: ""; position: absolute; left: 6px; right: 6px; bottom: 0; height: 3px; background: #fb979d; }
.apps .on { background: linear-gradient(to right, #5d564d 66px, #4a4238 66px); }
.on::after { left: 0; right: 0; }
.tray { display: flex; align-items: center; margin-left: auto; margin-right: 7px; padding-right: 28px; border-right: 1px solid #8a847c; height: 60px; }
.people { width: 24px; height: 24px; margin-right: 33px; }
.up-ic { width: 18px; height: 10px; margin-right: 14px; }
.lan { width: 24px; height: 20px; margin-right: 13px; }
.vol { width: 22px; height: 20px; }
.clock { width: 120px; display: flex; flex-direction: column; align-items: center; gap: 3px; padding-bottom: 2px; }
.note { width: 26px; height: 26px; margin-left: 13px; }
```
FILE: qr.js
```js
// Draws the avatar's code: three finder squares, one alignment square, filled data modules.
(function () {
  var n = 41, seed = 7;
  function rnd() { seed = (seed * 1103515245 + 12345) % 2147483648; return seed / 2147483648; }
  function ring(x, y, cx, cy, r) {
    var d = Math.max(Math.abs(x - cx), Math.abs(y - cy));
    return d > r ? null : d === r || d <= r - 2;
  }
  var d = "";
  for (var y = 0; y < n; y++) for (var x = 0; x < n; x++) {
    var on = rnd() < 0.52, f = [[3, 3], [n - 4, 3], [3, n - 4]];
    for (var k = 0; k < 3; k++) {
      var m = Math.max(Math.abs(x - f[k][0]), Math.abs(y - f[k][1]));
      if (m <= 4) on = m === 3 || m <= 1;
    }
    var a = ring(x, y, n - 7, n - 7, 2);
    if (a !== null) on = a;
    if (on) d += "M" + x + " " + y + "h1v1h-1z";
  }
  var p = document.createElementNS("http://www.w3.org/2000/svg", "path");
  p.setAttribute("d", d);
  document.getElementById("qr").appendChild(p);
})();
```
